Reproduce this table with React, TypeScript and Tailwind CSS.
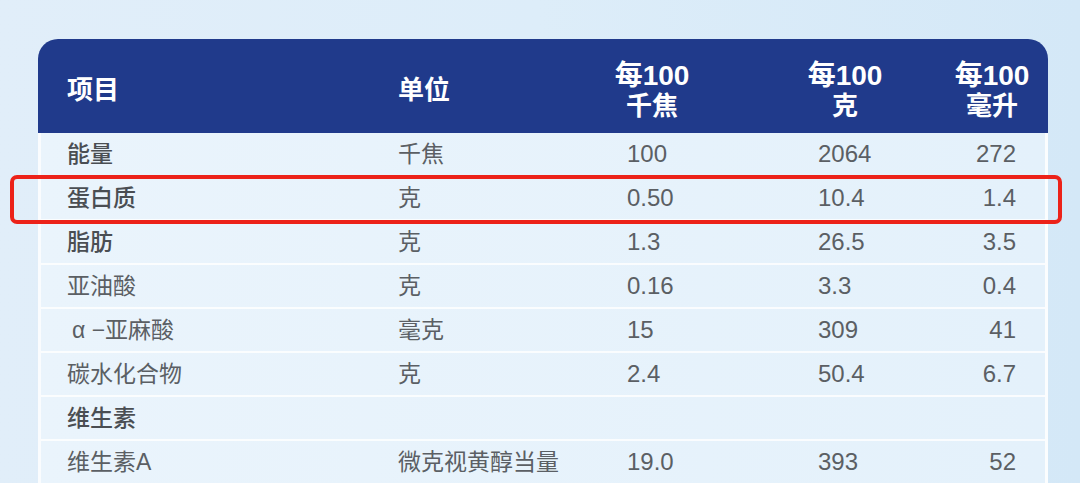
import React from 'react';

type Row = {
  name: string;
  unit: string;
  kj: string;
  g: string;
  ml: string;
  bold?: boolean;
  indent?: boolean;
};

const rows: Row[] = [
  { name: '能量', unit: '千焦', kj: '100', g: '2064', ml: '272', bold: true },
  { name: '蛋白质', unit: '克', kj: '0.50', g: '10.4', ml: '1.4', bold: true },
  { name: '脂肪', unit: '克', kj: '1.3', g: '26.5', ml: '3.5', bold: true },
  { name: '亚油酸', unit: '克', kj: '0.16', g: '3.3', ml: '0.4' },
  { name: 'α −亚麻酸', unit: '毫克', kj: '15', g: '309', ml: '41', indent: true },
  { name: '碳水化合物', unit: '克', kj: '2.4', g: '50.4', ml: '6.7' },
  { name: '维生素', unit: '', kj: '', g: '', ml: '', bold: true },
  { name: '维生素A', unit: '微克视黄醇当量', kj: '19.0', g: '393', ml: '52' },
];

const font = { fontFamily: '"Liberation Sans", "Noto Sans CJK SC", sans-serif' };

export default function App() {
  return (
    <div
      className="relative w-[1080px] h-[483px] overflow-hidden bg-gradient-to-r from-[#e1eef9] via-[#ddedf9] to-[#d4e8f7] pt-[39px] pl-[38px]"
      style={font}
    >
      <div className="w-[1010px]">
        {/* Header */}
        <div className="flex items-center h-[94px] rounded-t-[20px] bg-[#203a8b] pt-[9px] pl-[29px] text-white font-bold">
          <div className="w-[331px] text-[26px]">项目</div>
          <div className="w-[214px] text-[26px]">单位</div>
          <div className="w-[80px] text-center text-[28px] leading-[30px]">
            每100
            <br />
            <span className="text-[26px]">千焦</span>
          </div>
          <div className="w-[113px]" />
          <div className="w-[80px] text-center text-[28px] leading-[30px]">
            每100
            <br />
            <span className="text-[26px]">克</span>
          </div>
          <div className="w-[67px]" />
          <div className="w-[80px] text-center text-[28px] leading-[30px]">
            每100
            <br />
            <span className="text-[26px]">毫升</span>
          </div>
        </div>

        {/* Body */}
        <div className="bg-gradient-to-r from-[#eaf4fc] to-[#e4f1fb] border-l-[3px] border-r-[3px] border-white/80">
          {rows.map((r, i) => (
            <div
              key={i}
              className="flex items-center h-[44px] border-b-2 border-white/80 pl-[26px] text-[23px] text-[#5b5f64]"
            >
              <div
                className={`w-[331px] ${r.bold ? 'font-medium text-[#4a4e53]' : ''} ${r.indent ? 'pl-[5px]' : ''}`}
              >
                {r.name}
              </div>
              <div className="w-[229px]">{r.unit}</div>
              <div className="w-[191px] text-[24px]">{r.kj}</div>
              <div className="w-[120px] text-[24px]">{r.g}</div>
              <div className="w-[78px] text-right text-[24px]">{r.ml}</div>
            </div>
          ))}
        </div>
      </div>

      {/* Highlight box */}
      <div className="absolute left-[10px] top-[175px] w-[1052px] h-[49px] rounded-[7px] border-[4px] border-[#ec2219]" />
    </div>
  );
}
